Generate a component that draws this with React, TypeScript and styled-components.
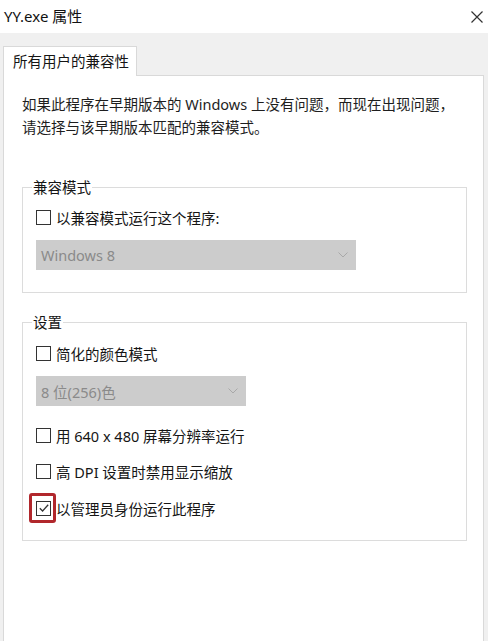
import React from 'react';
import styled, { createGlobalStyle } from 'styled-components';

const GlobalStyle = createGlobalStyle`
  html, body {
    margin: 0;
    padding: 0;
    background: #fff;
  }
  body {
    font-family: "Noto Sans", "Noto Sans CJK SC", sans-serif;
    font-size: 14.5px;
    color: #1a1a1a;
  }
  * {
    box-sizing: border-box;
  }
`;

const Window = styled.div`
  width: 488px;
  height: 641px;
  display: flex;
  flex-direction: column;
  overflow: hidden;
  background: #fff;
`;

const TitleBar = styled.div`
  height: 33px;
  display: flex;
  align-items: center;
  justify-content: space-between;
  padding: 0 5px 0 4px;
  background: #fff;
  color: #111;
`;

const Title = styled.span`
  font-size: 15px;
  line-height: 20px;
  margin-top: -1px;
`;

const Close = styled.div`
  width: 12px;
  height: 12px;
  display: flex;
`;

const Body = styled.div`
  flex: 1;
  display: flex;
  flex-direction: column;
  background: #f0f0f0;
  padding: 13px 4px 0 3px;
`;

const TabStrip = styled.div`
  display: flex;
`;

const Tab = styled.div`
  position: relative;
  z-index: 1;
  width: 134px;
  height: 30px;
  margin-bottom: -1px;
  padding: 0 0 2px 9px;
  display: flex;
  align-items: center;
  background: #fff;
  border: 1px solid #d9d9d9;
  border-bottom: none;
  color: #151515;
`;

const Panel = styled.div`
  flex: 1;
  background: #fff;
  border: 1px solid #d9d9d9;
  border-bottom: none;
  padding: 17px 16px 0 18px;
`;

const Description = styled.p`
  margin: 0;
  line-height: 23px;
  color: #1e1e1e;
`;

const Group = styled.fieldset<{ $top: number }>`
  margin: ${(p) => p.$top}px 0 0;
  padding: 0 13px 22px;
  min-width: 0;
  border: 1px solid #dcdcdc;
`;

const Legend = styled.legend`
  padding: 0 1px;
  margin-left: -4px;
  line-height: 20px;
  color: #151515;
`;

const CheckRow = styled.div<{ $top: number }>`
  height: 20px;
  margin-top: ${(p) => p.$top}px;
  display: flex;
  align-items: center;
  color: #151515;
`;

const Box = styled.span`
  position: relative;
  width: 15px;
  height: 15px;
  margin-right: 5px;
  flex: none;
  display: flex;
  align-items: center;
  justify-content: center;
  border: 1px solid #333;
  background: #fff;
`;

const Highlight = styled.span`
  position: absolute;
  top: -9px;
  bottom: -8px;
  left: -8px;
  right: -6px;
  border: 3px solid #b1272c;
  border-radius: 3px;
`;

const Dropdown = styled.div<{ $width: number }>`
  width: ${(p) => p.$width}px;
  height: 30px;
  margin-top: 13px;
  padding: 0 8px 0 5px;
  display: flex;
  align-items: center;
  justify-content: space-between;
  background: #cccccc;
  color: #8a8a8a;
`;

const Checkbox = ({ checked, marked }: { checked?: boolean; marked?: boolean }) => (
  <Box>
    {checked && (
      <svg width="12" height="12" viewBox="0 0 12 12">
        <polyline points="1.8,6.2 4.6,9 10.2,2.8" fill="none" stroke="#333" strokeWidth="1.3" />
      </svg>
    )}
    {marked && <Highlight />}
  </Box>
);

const Chevron = () => (
  <svg width="10" height="6" viewBox="0 0 10 6">
    <polyline points="0.5,0.5 5,5 9.5,0.5" fill="none" stroke="#a8a8a8" strokeWidth="1" />
  </svg>
);

const App = () => {
  return (
    <Window>
      <GlobalStyle />
      <TitleBar>
        <Title>YY.exe 属性</Title>
        <Close>
          <svg width="12" height="12" viewBox="0 0 12 12">
            <path d="M0.5 0.5 L11.5 11.5 M11.5 0.5 L0.5 11.5" stroke="#333" strokeWidth="1.2" />
          </svg>
        </Close>
      </TitleBar>
      <Body>
        <TabStrip>
          <Tab>所有用户的兼容性</Tab>
        </TabStrip>
        <Panel>
          <Description>
            如果此程序在早期版本的 Windows 上没有问题，而现在出现问题，
            <br />
            请选择与该早期版本匹配的兼容模式。
          </Description>

          <Group $top={38}>
            <Legend>兼容模式</Legend>
            <CheckRow $top={10}>
              <Checkbox />
              以兼容模式运行这个程序:
            </CheckRow>
            <Dropdown $width={320}>
              <span>Windows 8</span>
              <Chevron />
            </Dropdown>
          </Group>

          <Group $top={19}>
            <Legend>设置</Legend>
            <CheckRow $top={11}>
              <Checkbox />
              简化的颜色模式
            </CheckRow>
            <Dropdown $width={210}>
              <span>8 位(256)色</span>
              <Chevron />
            </Dropdown>
            <CheckRow $top={19}>
              <Checkbox />
              用 640 x 480 屏幕分辨率运行
            </CheckRow>
            <CheckRow $top={16}>
              <Checkbox />
              高 DPI 设置时禁用显示缩放
            </CheckRow>
            <CheckRow $top={17}>
              <Checkbox checked marked />
              以管理员身份运行此程序
            </CheckRow>
          </Group>
        </Panel>
      </Body>
    </Window>
  );
};

export default App;
